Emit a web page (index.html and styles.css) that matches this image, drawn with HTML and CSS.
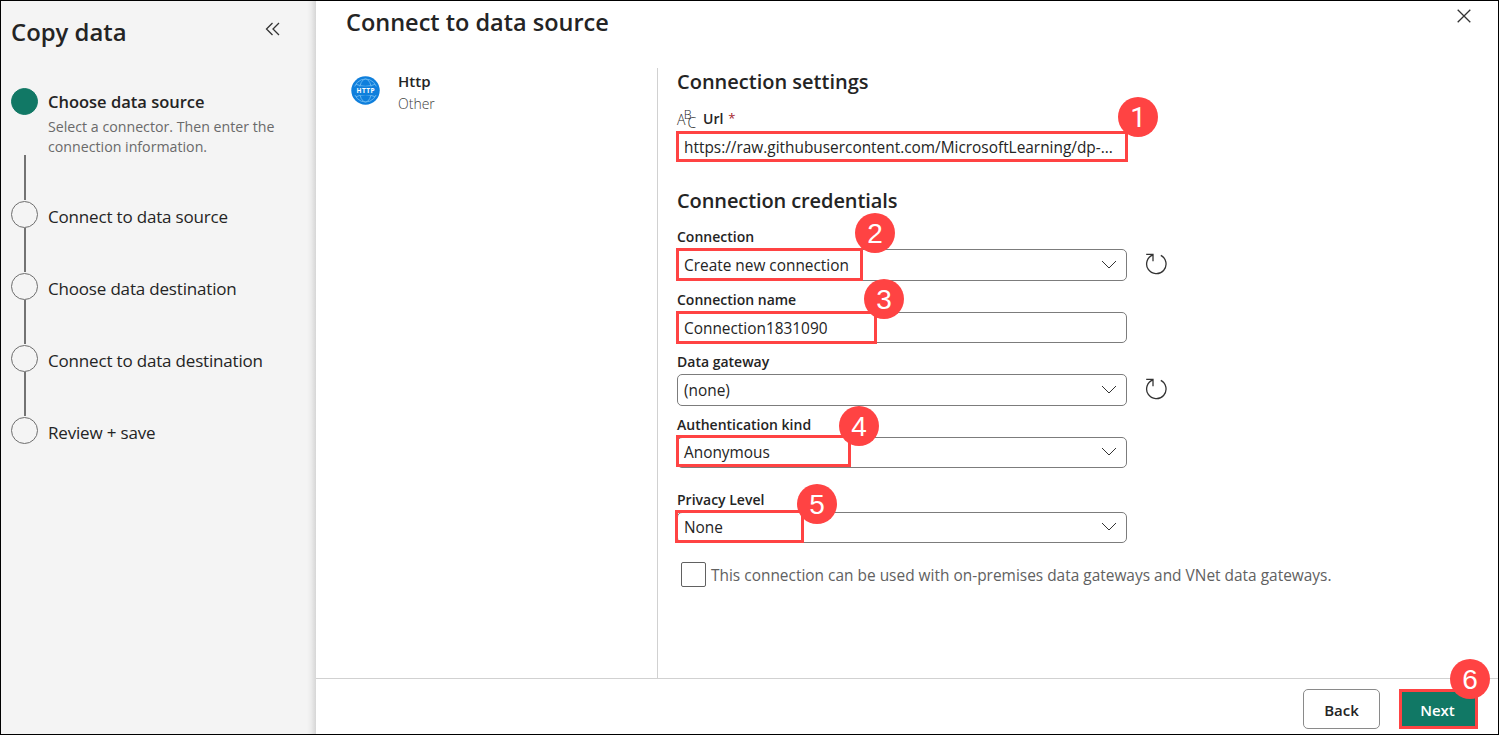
FILE: index.html
```html
<!DOCTYPE html>
<html lang="en">
<head>
<meta charset="utf-8">
<title>Copy data</title>
<link rel="stylesheet" href="styles.css">
</head>
<body>
<div class="dialog">
  <aside class="sidebar">
    <div class="sidebar-head">
      <h1 class="sidebar-title">Copy data</h1>
      <svg class="collapse" width="16" height="14" viewBox="0 0 16 14"><path d="M7.500 1 1.500 7l6 6M14 1 8 7l6 6"/></svg>
    </div>
    <ol class="steps">
      <li class="step step-first">
        <div class="rail"><i class="dot dot-active"></i><i class="line"></i></div>
        <div><div class="step-name active">Choose data source</div>
        <div class="step-desc">Select a connector. Then enter the<br>connection information.</div></div>
      </li>
      <li class="step"><div class="rail"><i class="dot"></i><i class="line"></i></div><div class="step-name">Connect to data source</div></li>
      <li class="step"><div class="rail"><i class="dot"></i><i class="line"></i></div><div class="step-name">Choose data destination</div></li>
      <li class="step"><div class="rail"><i class="dot"></i><i class="line"></i></div><div class="step-name">Connect to data destination</div></li>
      <li class="step"><div class="rail"><i class="dot"></i></div><div class="step-name">Review + save</div></li>
    </ol>
  </aside>
  <main class="main">
    <header class="main-head">
      <h2 class="main-title">Connect to data source</h2>
      <svg class="close" width="14" height="14" viewBox="0 0 14 14"><path d="M.7.7l12.600 12.600M13.300.7.7 13.300"/></svg>
    </header>
    <div class="content">
      <section class="source">
        <svg class="globe" width="29" height="29" viewBox="0 0 29 29">
          <circle class="disc" cx="14.500" cy="14.500" r="14.200"/>
          <g class="grid-lines"><circle cx="14.500" cy="14.500" r="11.500"/><ellipse cx="14.500" cy="14.500" rx="6" ry="11.500"/><path d="M5 8.300q9.500 4 19 0M5 20.700q9.500-4 19 0"/></g>
          <rect class="disc" x="2" y="10.500" width="25" height="8.500"/>
          <text x="14.500" y="17.200" text-anchor="middle" class="globe-text" textLength="18">HTTP</text>
        </svg>
        <div><div class="source-name">Http</div><div class="source-kind">Other</div></div>
      </section>
      <form class="form">
        <h3 class="section">Connection settings</h3>
        <div class="url-label">
          <svg class="type-icon" width="20" height="20" viewBox="0 0 20 20"><text class="abc" x="0" y="16.500">A</text><text class="abc abc-b" x="6.800" y="10.500">B</text><text class="abc" x="10.500" y="20">C</text></svg>
          <span class="label-text">Url</span><span class="required">*</span>
        </div>
        <div class="field field-url">https://raw.githubusercontent.com/MicrosoftLearning/dp-...<i class="mark mark-url"></i><b class="badge badge-url">1</b></div>
        <h3 class="section section-cred">Connection credentials</h3>
        <label class="label label-top">Connection</label>
        <div class="field tall">Create new connection<svg class="chev" width="16" height="10" viewBox="0 0 16 10"><path d="M1 1l7 7 7-7"/></svg><svg class="refresh" width="22" height="22" viewBox="0 0 22 22"><path d="M1.200 1.300H8V8.300M8 1.900A9.700 9.700 0 1 0 15.800 2.400"/></svg><i class="mark mark-conn"></i><b class="badge badge-conn">2</b></div>
        <label class="label">Connection name</label>
        <div class="field">Connection1831090<i class="mark mark-name"></i><b class="badge badge-name">3</b></div>
        <label class="label">Data gateway</label>
        <div class="field tall">(none)<svg class="chev" width="16" height="10" viewBox="0 0 16 10"><path d="M1 1l7 7 7-7"/></svg><svg class="refresh" width="22" height="22" viewBox="0 0 22 22"><path d="M1.200 1.300H8V8.300M8 1.900A9.700 9.700 0 1 0 15.800 2.400"/></svg></div>
        <label class="label">Authentication kind</label>
        <div class="field snug">Anonymous<svg class="chev" width="16" height="10" viewBox="0 0 16 10"><path d="M1 1l7 7 7-7"/></svg><i class="mark mark-auth"></i><b class="badge badge-auth">4</b></div>
        <label class="label label-privacy">Privacy Level</label>
        <div class="field snug">None<svg class="chev" width="16" height="10" viewBox="0 0 16 10"><path d="M1 1l7 7 7-7"/></svg><i class="mark mark-priv"></i><b class="badge badge-priv">5</b></div>
        <div class="check"><i class="box"></i>This connection can be used with on-premises data gateways and VNet data gateways.</div>
      </form>
    </div>
    <footer class="footer">
      <div class="btn">Back</div>
      <div class="btn btn-next">Next<b class="badge badge-next">6</b></div>
    </footer>
  </main>
</div>
</body>
</html>
```
FILE: styles.css
```css
* { box-sizing: border-box; }
body { margin: 0; font-family: "Open Sans", "Noto Sans", sans-serif; color: #242424; }
h1, h2, h3, ol { margin: 0; padding: 0; list-style: none; }
h1, h2, h3 { font-weight: 600; }
svg { fill: none; stroke: #333; flex: none; }
svg text { stroke: none; }
.dialog { display: flex; width: 1499px; height: 735px; border: 1px solid #000; background: #fff; overflow: hidden; }
.sidebar { width: 315px; background: linear-gradient(to right, #f4f4f4 306px, #ececec 310px, #d6d6d6 315px); padding-left: 10px; }
.sidebar-head { display: flex; height: 87px; }
.sidebar-title { width: 254px; padding-top: 14px; font-size: 23.900px; line-height: 34px; white-space: nowrap; }
.collapse { margin-top: 21px; stroke-width: 1.300; }
.step { display: flex; height: 72px; gap: 10px; white-space: nowrap; }
.step-first { height: 113px; }
.rail { width: 27px; }
.dot { display: block; width: 27px; height: 27px; border: 1px solid #6e6e6e; border-radius: 50%; }
.dot-active { background: #117865; border-color: #117865; }
.line { display: block; width: 2px; height: 44px; margin-left: 13px; background: #737373; }
.step-first .line { margin-top: 40px; height: 45px; }
.step-name { font-size: 17px; letter-spacing: -.18px; line-height: 24px; padding-top: 4px; }
.step-name.active { padding-top: 2px; font-weight: 600; font-size: 16.500px; letter-spacing: 0; }
.step-desc { font-size: 14.200px; line-height: 20px; color: #6a6a6a; padding-top: 3px; }
.main { flex: 1; display: flex; flex-direction: column; }
.main-head { display: flex; justify-content: space-between; height: 67px; padding: 0 27px 0 30px; white-space: nowrap; }
.main-title { font-size: 23.500px; line-height: 30px; padding-top: 6px; }
.close { margin-top: 8px; stroke-width: 1.300; }
.content { display: flex; height: 610px; }
.source { display: flex; gap: 18px; width: 342px; padding: 2px 0 0 35px; border-right: 1px solid #d1d1d1; }
.globe { margin-top: 6px; }
.disc { fill: #0f7fdc; stroke: none; }
.grid-lines { stroke: #63b4f0; }
.globe-text { font: 700 6.500px "Open Sans", sans-serif; fill: #fff; }
.source-name { font-size: 15px; font-weight: 600; line-height: 22px; }
.source-kind { font-size: 14px; font-weight: 300; line-height: 24px; color: #424242; }
.form { width: 470px; padding-left: 19px; white-space: nowrap; }
.section { font-size: 20px; line-height: 28px; }
.section-cred { margin-top: 26px; letter-spacing: -.1px; }
.url-label { display: flex; align-items: center; height: 24px; margin-top: 10px; }
.type-icon { overflow: visible; }
.abc { font: 300 14px "Open Sans", sans-serif; fill: #242424; }
.abc-b { font-size: 12.500px; }
.label-text { margin-left: 6px; font-size: 14px; font-weight: 600; }
.required { margin-left: 5px; font-size: 13px; color: #a4262c; }
.field { position: relative; display: flex; align-items: center; width: 450px; height: 31px; margin-top: 2px; padding: 2px 0 0 6px; border: 1px solid #7c7c7c; border-radius: 5px; font-size: 15.400px; }
.field-url { height: 29px; }
.tall { height: 32px; padding-top: 1px; }
.snug { padding-top: 0; }
.label { display: block; height: 20px; margin-top: 9px; font-size: 14px; font-weight: 600; line-height: 20px; }
.label-top { margin-top: 12px; }
.label-privacy { margin-top: 22px; }
.chev { position: absolute; right: 9px; top: 10px; }
.snug .chev { top: 9px; }
.refresh { position: absolute; left: 467px; top: 3px; stroke-width: 1.300; }
.mark { position: absolute; border: 3px solid #ff4343; }
.mark-url { left: -2px; top: -2px; width: 452px; height: 31px; }
.mark-conn { left: -2px; top: -2px; width: 187px; height: 33px; }
.mark-name { left: -2px; top: -2px; width: 201px; height: 33px; }
.mark-auth { left: -2px; top: -3px; width: 175px; height: 32px; }
.mark-priv { left: -3px; top: -3px; width: 129px; height: 33px; }
.badge { position: absolute; width: 40px; height: 40px; border-radius: 50%; background: #ff4343; color: #fff; font: 28px/41px "Liberation Sans", Arial, sans-serif; text-align: center; }
.badge-url { left: 440px; top: -36px; font-family: Roboto, sans-serif; }
.badge-conn { left: 177px; top: -37px; }
.badge-name { left: 186px; top: -34px; }
.badge-auth { left: 161px; top: -32px; }
.badge-priv { left: 119px; top: -29px; }
.badge-next { left: 48px; top: -33px; }
.check { display: flex; align-items: center; gap: 5px; height: 25px; margin: 19px 0 0 4px; font-size: 15.450px; color: #616161; }
.box { flex: none; width: 25px; height: 25px; border: 1px solid #616161; border-radius: 2px; }
.footer { display: flex; justify-content: flex-end; gap: 19px; height: 56px; padding: 10px 20px 0 0; border-top: 1px solid #d1d1d1; }
.btn { display: flex; align-items: center; justify-content: center; width: 77px; height: 40px; padding-top: 2px; border: 1px solid #8a8a8a; border-radius: 5px; font-size: 15px; font-weight: 600; }
.btn-next { position: relative; width: 79px; padding-right: 2px; border: 3px solid #ff4343; border-radius: 0; background: #117865; color: #fff; }
```
